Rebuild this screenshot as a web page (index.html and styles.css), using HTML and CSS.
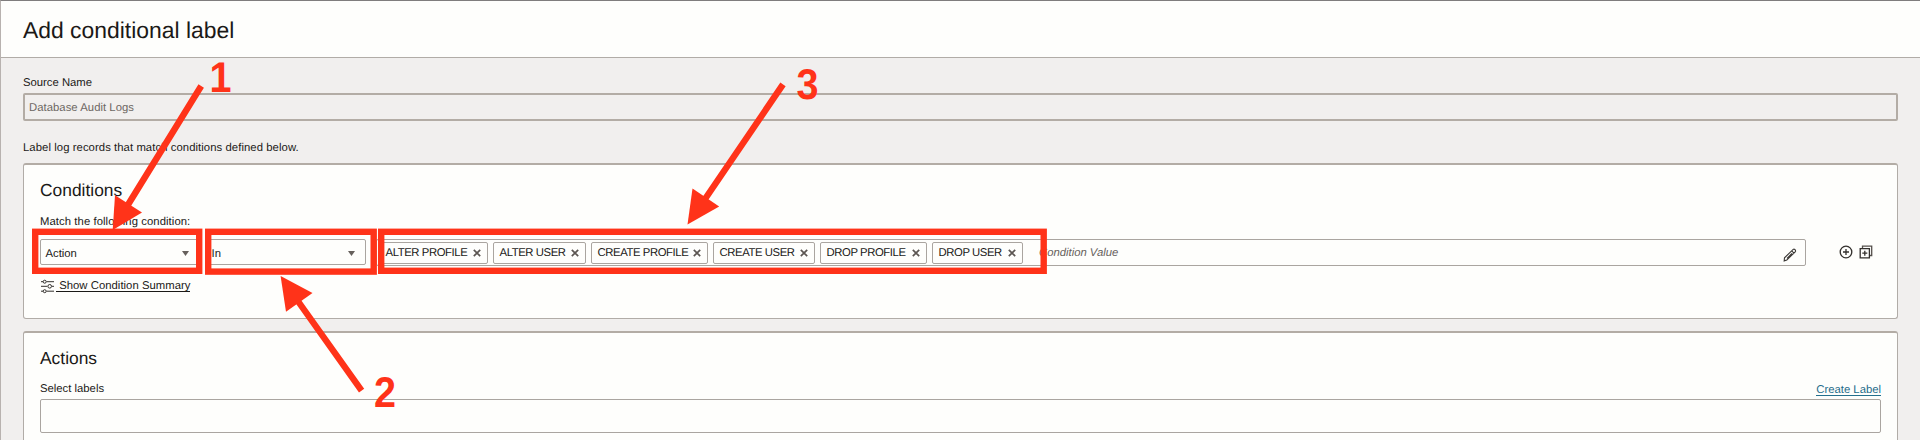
FILE: index.html
```html
<!DOCTYPE html>
<html lang="en">
<head>
<meta charset="utf-8">
<title>Add conditional label</title>
<link rel="stylesheet" href="styles.css">
</head>
<body>
<main class="dialog">
  <header class="dialog-header"><h1 class="dialog-title">Add conditional label</h1></header>
  <div class="dialog-body">
    <label class="label source-label">Source Name</label>
    <div class="readonly-field">Database Audit Logs</div>
    <p class="label intro">Label log records that match conditions defined below.</p>

    <section class="panel conditions">
      <h2 class="panel-title">Conditions</h2>
      <p class="label match-label">Match the following condition:</p>
      <div class="condition-row">
        <div class="select"><span>Action</span><i class="caret"></i></div>
        <div class="select operator"><span>In</span><i class="caret"></i></div>
        <div class="value-field">
          <span class="chip chip-alter-profile">ALTER PROFILE<svg class="x" viewBox="0 0 8 8"><path d="M.8.8l6.4 6.4M7.2.8L.8 7.2"/></svg></span>
          <span class="chip chip-alter-user">ALTER USER<svg class="x" viewBox="0 0 8 8"><path d="M.8.8l6.4 6.4M7.2.8L.8 7.2"/></svg></span>
          <span class="chip chip-create-profile">CREATE PROFILE<svg class="x" viewBox="0 0 8 8"><path d="M.8.8l6.4 6.4M7.2.8L.8 7.2"/></svg></span>
          <span class="chip chip-create-user">CREATE USER<svg class="x" viewBox="0 0 8 8"><path d="M.8.8l6.4 6.4M7.2.8L.8 7.2"/></svg></span>
          <span class="chip chip-drop-profile">DROP PROFILE<svg class="x" viewBox="0 0 8 8"><path d="M.8.8l6.4 6.4M7.2.8L.8 7.2"/></svg></span>
          <span class="chip chip-drop-user">DROP USER<svg class="x" viewBox="0 0 8 8"><path d="M.8.8l6.4 6.4M7.2.8L.8 7.2"/></svg></span>
          <span class="placeholder">Condition Value</span>
          <svg class="pencil" viewBox="0 0 14 14"><path d="M1.2 12.9l.3-3.1 8.7-8.4q.9-.6 1.8.3t.4 1.9l-8.6 8.5zM8.7 2.9l2.3 2.3M4 10.3l5-4.9"/></svg>
        </div>
        <div class="row-actions">
          <svg class="add" viewBox="0 0 14 14"><circle cx="7" cy="7" r="5.8"/><path d="M7 4v6M4 7h6"/></svg>
          <svg class="add-group" viewBox="0 0 14 14"><path class="back" d="M3.5 3.5V1.2h9.2v9.3h-2.2"/><path d="M1.2 3.6h9.2v9.2H1.2zM5.8 5.7v5M3.3 8.2h5"/></svg>
        </div>
      </div>
      <div class="summary">
        <svg class="sliders" viewBox="0 0 15 15"><path d="M1 2.7h2M6.5 2.7H14M1 7.3h6.3M12 7.3h2M1 12.2h2M6.5 12.2H14"/><circle cx="4.7" cy="2.7" r="1.5"/><circle cx="9.7" cy="7.3" r="1.8"/><circle cx="4.7" cy="12.2" r="1.5"/></svg>
        <a class="summary-link">&nbsp;Show Condition Summary</a>
      </div>
    </section>

    <section class="panel actions">
      <h2 class="panel-title">Actions</h2>
      <div class="labels-head"><label class="label select-label">Select labels</label><a class="create-link">Create Label</a></div>
      <div class="labels-field"></div>
    </section>
  </div>
</main>

<svg class="annotations" width="1920" height="440" viewBox="0 0 1920 440">
  <g class="marks">
    <rect x="35.2" y="231.8" width="164" height="39"/>
    <rect x="208.2" y="231.8" width="165.5" height="39.8"/>
    <rect x="381.2" y="231.8" width="662.5" height="39"/>
    <path d="M201.2 86L126 208M361.6 390.6L295 297M783 84.4L703 202"/>
  </g>
  <g class="heads">
    <path d="M112.7 230L115 195.3L142 212.5z"/>
    <path d="M280.6 276L312.5 293L286 311.8z"/>
    <path d="M687.5 224.5L692.5 188.4L719.2 206.6z"/>
  </g>
  <g class="numbers">
    <text transform="translate(209.5 91.8) scale(.92 1)">1</text>
    <text transform="translate(374 407.2) scale(.92 1)">2</text>
    <text transform="translate(796.6 98.5) scale(.92 1)">3</text>
  </g>
</svg>
</body>
</html>
```

FILE: styles.css
```css
* { box-sizing: border-box; }
html, body { margin: 0; height: 100%; overflow: hidden; }
body {
  font: 11.3px/14px "Liberation Sans", Arial, sans-serif;
  color: #1b1917;
  background: #f1efee;
  text-rendering: geometricPrecision;
}
.dialog { height: 440px; overflow: hidden; border-top: 1px solid #7f7d7d; border-left: 1px solid #b8b2af; }
.dialog-header { height: 57px; padding: 15px 22px 0; background: #fefefc; border-bottom: 1px solid #b1aca7; }
h1, h2, p { margin: 0; font-weight: 400; }
.dialog-title { font-size: 22.9px; line-height: 28px; }
.dialog-body { display: flex; flex-direction: column; padding: 18px 22px 0; }
.label { display: block; line-height: 14px; letter-spacing: .07px; }
.source-label { height: 17px; letter-spacing: 0; }
.readonly-field { height: 28px; padding: 6px 4px 0; border: 2px solid #b3aca5; border-radius: 2px; color: #6d6763; letter-spacing: .04px; }
.intro { margin-top: 20px; height: 22px; }

.panel { background: #fefefc; border: 1px solid #b1aca7; border-top: 2px solid #b3aca5; border-radius: 3px; padding: 14px 16px 0; }
.panel-title { padding-bottom: 1px; font-size: 17.4px; line-height: 22px; }
.conditions { height: 156px; }
.match-label { margin-top: 13px; }
.condition-row { display: flex; margin-top: 10px; height: 27px; }
.select { display: flex; justify-content: space-between; width: 160px; height: 26px; padding: 7px 10px 0 4.5px; border: 1px solid #aaa5a0; border-radius: 2px; }
.operator { margin-left: 6px; }
.caret { width: 7px; height: 5px; margin-top: 4px; background: #66605c; clip-path: polygon(0 0, 100% 0, 50% 100%); }
.value-field { display: flex; gap: 5px; width: 1430px; height: 27px; margin-left: 10px; padding: 2px 8px 0 2px; border: 1px solid #aaa5a0; border-radius: 2px; }
.chip { display: flex; justify-content: space-between; height: 22px; padding: 3px 6px 0 5.5px; border: 1px solid #aaa5a0; border-radius: 2px; letter-spacing: -.4px; white-space: nowrap; }
.chip-alter-profile { width: 109px; }
.chip-alter-user { width: 93px; }
.chip-create-profile { width: 117px; }
.chip-create-user { width: 102px; }
.chip-drop-profile { width: 107px; }
.chip-drop-user { width: 91px; }
.x { width: 8px; height: 8px; margin-top: 3px; fill: none; stroke: #5c5652; stroke-width: 1.7; }
.placeholder { margin: 4px auto 0 11px; font-style: italic; color: #67615d; }
.pencil { width: 14px; height: 14px; margin-top: 6px; fill: none; stroke: #3b3835; stroke-width: 1.1; }
.row-actions { display: flex; gap: 6px; margin: 6px 0 0 32.5px; }
.add, .add-group { width: 14px; height: 14px; fill: none; stroke: #33302d; stroke-width: 1.3; }
.back { stroke: #55504c; }
.summary { display: flex; gap: 1px; margin-top: 13px; letter-spacing: .03px; }
.sliders { width: 15px; height: 15px; fill: none; stroke: #33302d; stroke-width: 1; }
.summary-link { display: block; height: 13px; border-bottom: 1px solid #1b1917; }

.actions { height: 180px; margin-top: 12px; }
.labels-head { display: flex; justify-content: space-between; margin-top: 12px; height: 17px; }
.select-label { letter-spacing: 0; }
.create-link { height: 13px; margin-top: 1px; line-height: 14px; border-bottom: 1px solid #236f8c; color: #1f6c8b; }
.labels-field { height: 34px; border: 1px solid #aaa5a0; border-radius: 2px; }

.annotations { position: absolute; inset: 0; }
.marks { fill: none; stroke: #ff3319; stroke-width: 6.4; }
.heads, .numbers { fill: #ff3319; }
.numbers { font: bold 43px "Liberation Sans", Arial, sans-serif; }
```
